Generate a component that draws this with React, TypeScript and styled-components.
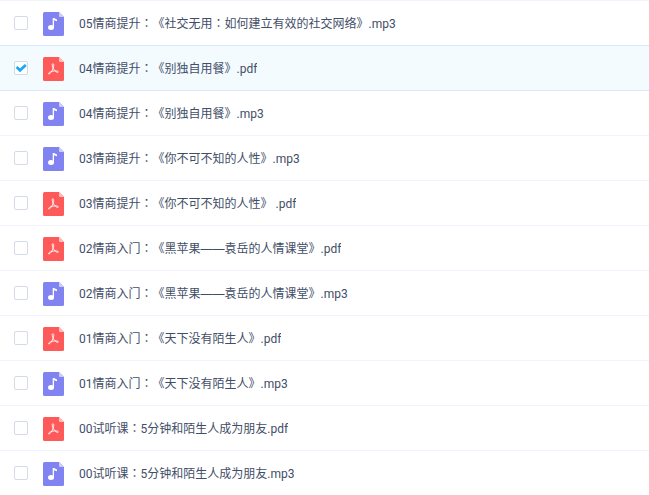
import React, { useState } from "react";
import styled, { createGlobalStyle } from "styled-components";

const GlobalStyle = createGlobalStyle`
  * { box-sizing: border-box; }
  body {
    margin: 0;
    background: #fff;
    color: #424e67;
    font-family: Roboto, "Noto Sans CJK SC", sans-serif;
    font-size: 12px;
    line-height: 18px;
    text-spacing-trim: space-all;
  }
`;

const FileList = styled.ul`
  margin: 0;
  padding: 0;
  list-style: none;
  border-top: 1px solid #f0f4fc;
`;

const FileRow = styled.li<{ $selected: boolean }>`
  height: 45px;
  background: ${(p) => (p.$selected ? "#f3fbff" : "#fff")};
  border-bottom: 1px solid ${(p) => (p.$selected ? "#d9e8fa" : "#f0f4fc")};

  &:has(+ [data-selected="true"]) {
    border-bottom-color: #d9e8fa;
  }
`;

const RowLabel = styled.label`
  display: flex;
  align-items: center;
  height: 100%;
  padding: 0 14px;
  cursor: pointer;
`;

const CheckField = styled.span`
  display: grid;
  flex: none;
  margin-right: 15px;

  > * {
    grid-area: 1 / 1;
  }
`;

const Checkbox = styled.input`
  appearance: none;
  width: 14px;
  height: 14px;
  margin: 0;
  border: 1px solid #d3dbe8;
  border-radius: 2px;
  background: #fff;
`;

const Tick = styled.svg`
  width: 14px;
  height: 14px;
  pointer-events: none;
`;

const Icon = styled.svg`
  flex: none;
  width: 21px;
  height: 26px;
  padding-top: 2px;
  margin-right: 15px;
`;

const FileName = styled.span`
  min-width: 0;
  padding-top: 2px;
  overflow: hidden;
  text-overflow: ellipsis;
  white-space: nowrap;
`;

const Punctuation = styled.span`
  font-family: "Liberation Sans", "Noto Sans CJK TC", sans-serif;
  line-height: 1;
`;

type Kind = "mp3" | "pdf";

function FileIcon({ kind }: { kind: Kind }) {
  const audio = kind === "mp3";
  return (
    <Icon viewBox="0 0 21 24" aria-hidden="true">
      <path
        d="M1.5 0H16L21 5V22.5Q21 24 19.5 24H1.5Q0 24 0 22.5V1.5Q0 0 1.5 0Z"
        fill={audio ? "#8183f1" : "#ff5a5a"}
      />
      <path d="M16 0L21 5H17Q16 5 16 4Z" fill={audio ? "#cdcefa" : "#ffbdbd"} />
      {audio ? (
        <>
          <ellipse cx="8" cy="15.4" rx="3" ry="2.5" fill="#fff" />
          <path d="M9.7 15.5V6H11L14 7.4V9.2L11 8.3V15.5Z" fill="#fff" />
        </>
      ) : (
        <path
          d="M9.6 6.8C11.1 6.5 10.9 9 10.2 11C9.2 13.7 7.2 17.2 5.8 16.9C4.6 16.4 6.8 14.8 9.2 14.3C11.9 13.7 15.4 13.8 15.4 15C14.9 16.4 11.7 14.2 10.4 11.6C9.5 9.8 8.6 7.1 9.6 6.8Z"
          fill="none"
          stroke="#fff"
          strokeWidth="0.9"
          strokeLinejoin="round"
        />
      )}
    </Icon>
  );
}

const COLON = "\uFF1A";

const files: { name: string; kind: Kind }[] = [
  { name: `05情商提升${COLON}《社交无用${COLON}如何建立有效的社交网络》`, kind: "mp3" },
  { name: `04情商提升${COLON}《别独自用餐》`, kind: "pdf" },
  { name: `04情商提升${COLON}《别独自用餐》`, kind: "mp3" },
  { name: `03情商提升${COLON}《你不可不知的人性》`, kind: "mp3" },
  { name: `03情商提升${COLON}《你不可不知的人性》 `, kind: "pdf" },
  { name: `02情商入门${COLON}《黑苹果——袁岳的人情课堂》`, kind: "pdf" },
  { name: `02情商入门${COLON}《黑苹果——袁岳的人情课堂》`, kind: "mp3" },
  { name: `01情商入门${COLON}《天下没有陌生人》`, kind: "pdf" },
  { name: `01情商入门${COLON}《天下没有陌生人》`, kind: "mp3" },
  { name: `00试听课${COLON}5分钟和陌生人成为朋友`, kind: "pdf" },
  { name: `00试听课${COLON}5分钟和陌生人成为朋友`, kind: "mp3" },
];

export default function App() {
  const [selected, setSelected] = useState<number[]>([1]);

  const toggle = (index: number) =>
    setSelected((current) =>
      current.includes(index) ? current.filter((i) => i !== index) : [...current, index]
    );

  return (
    <>
      <GlobalStyle />
      <FileList lang="zh-CN">
        {files.map((file, index) => {
          const checked = selected.includes(index);
          const parts = `${file.name}.${file.kind}`.split(/(\uFF1A|\u2014+)/);
          return (
            <FileRow key={index} $selected={checked} data-selected={checked}>
              <RowLabel>
                <CheckField>
                  <Checkbox type="checkbox" checked={checked} onChange={() => toggle(index)} />
                  {checked && (
                    <Tick viewBox="0 0 14 14" aria-hidden="true">
                      <path
                        d="M2.6 6.1L6 9.3L11.8 3.9"
                        fill="none"
                        stroke="#1aa8f8"
                        strokeWidth="2.7"
                      />
                    </Tick>
                  )}
                </CheckField>
                <FileIcon kind={file.kind} />
                <FileName>
                  {parts.map((part, i) =>
                    i % 2 ? (
                      <Punctuation key={i} lang="zh-TW">
                        {part}
                      </Punctuation>
                    ) : (
                      part
                    )
                  )}
                </FileName>
              </RowLabel>
            </FileRow>
          );
        })}
      </FileList>
    </>
  );
}
